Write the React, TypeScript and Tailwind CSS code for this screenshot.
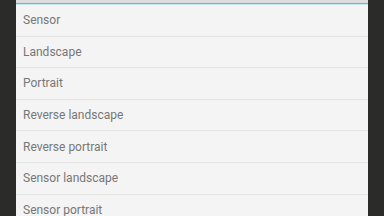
const options = [
  'Sensor',
  'Landscape',
  'Portrait',
  'Reverse landscape',
  'Reverse portrait',
  'Sensor landscape',
  'Sensor portrait',
];

export default function App() {
  return (
    <div className="w-[384px] h-[216px] overflow-hidden bg-[#2b2b2a] flex" style={{ fontFamily: 'Roboto, "Noto Sans", sans-serif' }}>
      <div className="ml-[16px] w-[352px] h-full bg-[#f4f4f4] flex flex-col">
        <div className="h-[3px] bg-[#dcdcdc] shrink-0" />
        <div className="h-px bg-[#8fa9ad] shrink-0" />
        <div className="h-px bg-[#c4e9f0] shrink-0" />
        {options.map((o) => (
          <div key={o} className="h-[31.6px] shrink-0 flex items-center pl-[7px] border-b-[1.5px] border-[#e3e3e3] text-[12px] text-[#777777]">
            {o}
          </div>
        ))}
      </div>
    </div>
  );
}
